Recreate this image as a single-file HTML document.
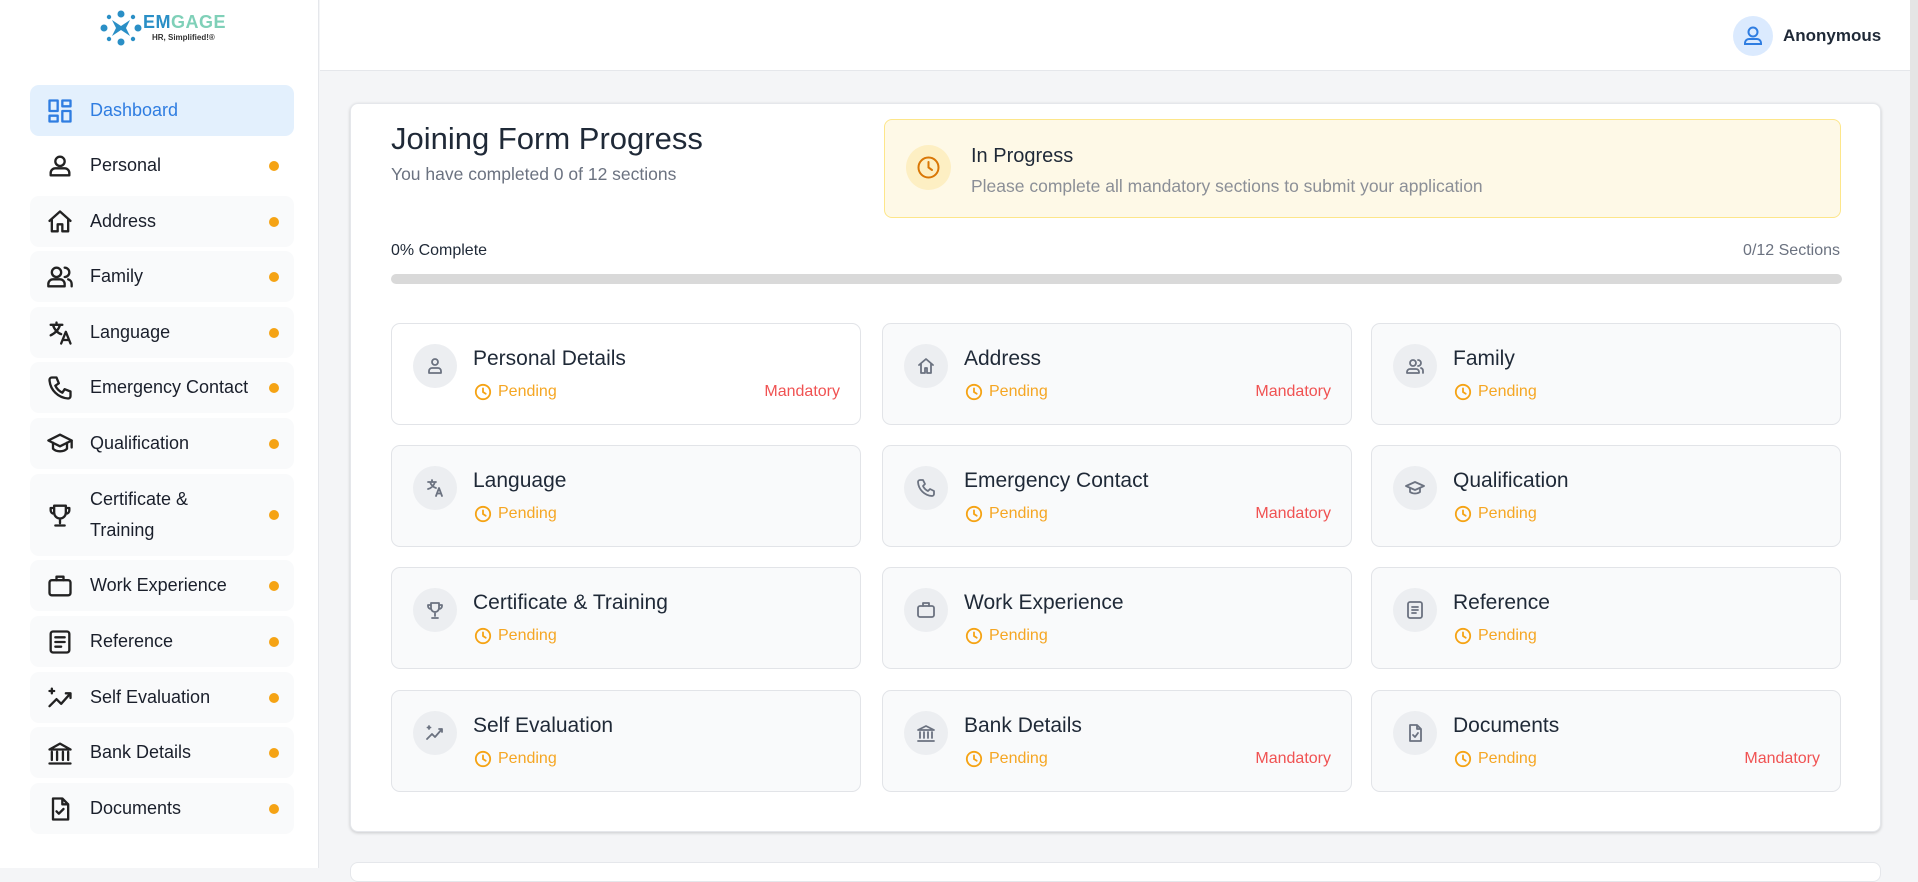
<!DOCTYPE html>
<html><head><meta charset="utf-8"><style>
*{box-sizing:border-box;margin:0;padding:0}
body{width:1918px;height:868px;overflow:hidden;font-family:"Liberation Sans",sans-serif;background:#f4f5f7;position:relative;color:#1f2937}
.side{position:absolute;left:0;top:0;width:319px;height:868px;background:#fff;border-right:1px solid #e5e7eb}
.nav{position:absolute;left:30px;width:264px;height:51px;border-radius:9px;background:#f9fafb;display:flex;align-items:center;font-size:18px;color:#1a1f2b}
.nav svg{position:absolute;left:16px;width:28px;height:28px;fill:none;stroke:#222;stroke-width:2;stroke-linecap:round;stroke-linejoin:round}
.nav span{position:absolute;left:60px;line-height:31px}
.nav i{position:absolute;left:239px;top:50%;margin-top:-5px;width:10px;height:10px;border-radius:50%;background:#f5a314}
.header{position:absolute;left:320px;top:0;right:0;height:71px;background:#fff;border-bottom:1px solid #e5e7eb}
.card{position:absolute;left:350px;top:103px;width:1531px;height:729px;background:#fff;border-radius:8px;box-shadow:0 1px 3px rgba(0,0,0,.18);border:1px solid #e5e7eb}
.sc{position:absolute;width:470px;height:102px;border:1px solid #e2e4e8;border-radius:9px;background:#f9fafb}
.sc .ic{position:absolute;left:21px;top:20px;width:44px;height:44px;border-radius:50%;background:#eceef1}
.sc .ic svg{position:absolute;left:12px;top:12px;width:20px;height:20px;fill:none;stroke:#6b7280;stroke-width:1.8;stroke-linecap:round;stroke-linejoin:round}
.sc .t{position:absolute;left:81px;top:23px;font-size:21px;color:#1f2937}
.sc .p{position:absolute;left:82px;top:59px;font-size:16px;color:#f5a623;display:flex;align-items:center}
.sc .p svg{width:18px;height:18px;margin-right:6px;fill:none;stroke:#f5a314;stroke-width:2;stroke-linecap:round}
.sc .m{position:absolute;right:20px;top:59px;font-size:16px;color:#f05252}
</style></head><body>
<div class="side">
 <svg style="position:absolute;left:100px;top:10px" width="42" height="36" viewBox="0 0 42 36">
  <g fill="#2a8fc6"><circle cx="21" cy="4" r="3.5"/><circle cx="21" cy="32" r="3.5"/><circle cx="4" cy="18" r="3.5"/><circle cx="38" cy="18" r="3.5"/><circle cx="9" cy="7" r="2.2"/><circle cx="33" cy="7" r="2.2"/><circle cx="9" cy="29" r="2.2"/><circle cx="33" cy="29" r="2.2"/>
  <path d="M12 10 L21 16 L30 10 L26 18 L30 26 L21 20 L12 26 L16 18Z"/></g></svg>
 <div style="position:absolute;left:143px;top:12px;font-size:18px;font-weight:bold;letter-spacing:0.5px"><span style="color:#2a8fc6">EM</span><span style="color:#7fd0b8">GAGE</span></div>
 <div style="position:absolute;left:152px;top:33px;font-size:8px;font-weight:bold;color:#333">HR, Simplified!®</div>

 <div class="nav" style="top:85px;background:#e3f0fd;color:#2f7de1"><svg viewBox="0 0 24 24" style="stroke:#2f7de1"><rect x="3" y="3" width="7" height="9"/><rect x="14" y="3" width="7" height="5"/><rect x="14" y="12" width="7" height="9"/><rect x="3" y="16" width="7" height="5"/></svg><span>Dashboard</span></div>
 <div class="nav" style="top:140px;background:#fff"><svg viewBox="0 0 24 24"><circle cx="12" cy="8" r="4"/><path d="M4 20v-2a4 4 0 0 1 4-4h8a4 4 0 0 1 4 4v2z"/></svg><span>Personal</span><i></i></div>
 <div class="nav" style="top:196px"><svg viewBox="0 0 24 24"><path d="M3 11l9-8 9 8M5 10v10h5v-6h4v6h5V10"/></svg><span>Address</span><i></i></div>
 <div class="nav" style="top:251px"><svg viewBox="0 0 24 24"><circle cx="9" cy="8" r="4"/><path d="M2 20v-2a4 4 0 0 1 4-4h6a4 4 0 0 1 4 4v2z"/><path d="M16 4a4 4 0 0 1 0 8M19 14a4 4 0 0 1 3 4v2"/></svg><span>Family</span><i></i></div>
 <div class="nav" style="top:307px"><svg viewBox="0 0 24 24"><path d="M4 5h10M9 3v2M6 5c1 4 4 7 7 8M12 5c-1 4-4 7-8 9M13 21l4-10 4 10M14.5 18h5"/></svg><span>Language</span><i></i></div>
 <div class="nav" style="top:362px"><svg viewBox="0 0 24 24"><path d="M5 3h4l2 5-3 2a12 12 0 0 0 6 6l2-3 5 2v4a2 2 0 0 1-2 2A17 17 0 0 1 3 5a2 2 0 0 1 2-2"/></svg><span>Emergency Contact</span><i></i></div>
 <div class="nav" style="top:418px"><svg viewBox="0 0 24 24"><path d="M2 9l10-5 10 5-10 5z"/><path d="M6 11v5c3 3 9 3 12 0v-5M22 9v6"/></svg><span>Qualification</span><i></i></div>
 <div class="nav" style="top:474px;height:82px"><svg viewBox="0 0 24 24"><path d="M7 4h10v6a5 5 0 0 1-10 0zM7 6H4v2a3 3 0 0 0 3 3M17 6h3v2a3 3 0 0 1-3 3M12 15v4M8 21h8"/></svg><span style="top:10px">Certificate &amp;</span><span style="top:41px">Training</span><i></i></div>
 <div class="nav" style="top:560px"><svg viewBox="0 0 24 24"><rect x="3" y="7" width="18" height="13" rx="2"/><path d="M9 7V4h6v3"/></svg><span>Work Experience</span><i></i></div>
 <div class="nav" style="top:616px"><svg viewBox="0 0 24 24"><rect x="4" y="3" width="16" height="18" rx="2"/><path d="M8 8h8M8 12h8M8 16h5"/></svg><span>Reference</span><i></i></div>
 <div class="nav" style="top:672px"><svg viewBox="0 0 24 24"><path d="M3 19l6-6 4 4 8-9M17 8h4v4M5 4v4M3 6h4"/></svg><span>Self Evaluation</span><i></i></div>
 <div class="nav" style="top:727px"><svg viewBox="0 0 24 24"><path d="M3 9l9-5 9 5zM5 11v7M9.5 11v7M14.5 11v7M19 11v7M3 21h18"/></svg><span>Bank Details</span><i></i></div>
 <div class="nav" style="top:783px"><svg viewBox="0 0 24 24"><path d="M6 3h8l5 5v13H6zM14 3v5h5M9 14l2 2 4-4"/></svg><span>Documents</span><i></i></div>
</div>

<div class="header">
 <div style="position:absolute;left:1413px;top:16px;width:40px;height:40px;border-radius:50%;background:#dbeafe"><svg width="40" height="40" viewBox="0 0 40 40" fill="none" stroke="#2f7de1" stroke-width="2"><circle cx="20" cy="16" r="4.5"/><path d="M12 28v-1a4 4 0 0 1 4-4h8a4 4 0 0 1 4 4v1z"/></svg></div>
 <div style="position:absolute;left:1463px;top:26px;font-size:17px;font-weight:bold;color:#1f2937">Anonymous</div>
</div>
<div style="position:absolute;right:0;top:0;width:8px;height:600px;background:#e5e5e5"></div>

<div class="card">
 <div style="position:absolute;left:40px;top:17px;font-size:31px;color:#1f2937">Joining Form Progress</div>
 <div style="position:absolute;left:40px;top:60px;font-size:17.5px;color:#6b7280">You have completed 0 of 12 sections</div>
 <div style="position:absolute;left:533px;top:15px;width:957px;height:99px;background:#fef9e7;border:1px solid #fde68a;border-radius:8px">
  <div style="position:absolute;left:21px;top:25px;width:45px;height:45px;border-radius:50%;background:#fdefc3"><svg width="45" height="45" viewBox="0 0 45 45" fill="none" stroke="#d97706" stroke-width="2" stroke-linecap="round"><circle cx="22.5" cy="22.5" r="10"/><path d="M22.5 17v5.5l3.5 2.5"/></svg></div>
  <div style="position:absolute;left:86px;top:25px;font-size:20px;color:#1f2937">In Progress</div>
  <div style="position:absolute;left:86px;top:56px;font-size:17.5px;color:#8b8f97">Please complete all mandatory sections to submit your application</div>
 </div>
 <div style="position:absolute;left:40px;top:138px;font-size:16px;color:#1f2937">0% Complete</div>
 <div style="position:absolute;right:40px;top:138px;font-size:16px;color:#6b7280">0/12 Sections</div>
 <div style="position:absolute;left:40px;top:170px;width:1451px;height:10px;border-radius:5px;background:#d9d9d9"></div>
</div>

<div id="grid"></div>
<div style="position:absolute;left:350px;top:862px;width:1531px;height:20px;background:#fff;border:1px solid #e5e7eb;border-radius:8px"></div>
<script>
var P='<svg viewBox="0 0 20 20"><circle cx="10" cy="10" r="8"/><path d="M10 6v4l3 2"/></svg>';
var ic={
p:'<circle cx="10" cy="6" r="3"/><path d="M4 17v-2a3 3 0 0 1 3-3h6a3 3 0 0 1 3 3v2z"/>',
a:'<path d="M3 9l7-6 7 6M5 8v9h4v-5h2v5h4V8"/>',
f:'<circle cx="8" cy="7" r="3"/><path d="M2 17v-1a3 3 0 0 1 3-3h6a3 3 0 0 1 3 3v1zM13 4a3 3 0 0 1 0 6M16 12a3 3 0 0 1 2 3v2"/>',
l:'<path d="M3 4h8M7 2v2M5 4c1 3 3 5 6 6M10 4c-1 3-3 6-7 7M11 18l3-8 3 8M12 15.5h4"/>',
e:'<path d="M4 2h3l2 4-2 2a10 10 0 0 0 5 5l2-2 4 2v3a2 2 0 0 1-2 2A15 15 0 0 1 2 4a2 2 0 0 1 2-2"/>',
q:'<path d="M1 8l9-4 9 4-9 4z"/><path d="M5 10v4c3 2 7 2 10 0v-4"/>',
c:'<path d="M6 3h8v5a4 4 0 0 1-8 0zM6 5H3v1a3 3 0 0 0 3 3M14 5h3v1a3 3 0 0 1-3 3M10 12v4M7 18h6"/>',
w:'<rect x="2" y="6" width="16" height="11" rx="2"/><path d="M7 6V3h6v3"/>',
r:'<rect x="3" y="2" width="14" height="16" rx="2"/><path d="M7 7h6M7 10h6M7 13h4"/>',
s:'<path d="M2 16l5-5 3 3 7-8M14 6h3v3M4 3v3M2.5 4.5h3"/>',
b:'<path d="M2 7l8-4 8 4zM4 9v6M8 9v6M12 9v6M16 9v6M2 18h16"/>',
d:'<path d="M5 2h7l4 4v12H5zM12 2v4h4M8 12l2 2 3-4"/>'};
var items=[['Personal Details','p',1],['Address','a',1],['Family','f',0],['Language','l',0],['Emergency Contact','e',1],['Qualification','q',0],['Certificate & Training','c',0],['Work Experience','w',0],['Reference','r',0],['Self Evaluation','s',0],['Bank Details','b',1],['Documents','d',1]];
var xs=[391,882,1371],ys=[323,445,567,690],h='';
items.forEach(function(it,i){
 h+='<div class="sc" style="left:'+xs[i%3]+'px;top:'+ys[Math.floor(i/3)]+'px;'+(i==0?'background:#fff':'')+'"><div class="ic"><svg viewBox="0 0 20 20">'+ic[it[1]]+'</svg></div><div class="t">'+it[0].replace('&','&amp;')+'</div><div class="p">'+P+'Pending</div>'+(it[2]?'<div class="m">Mandatory</div>':'')+'</div>';
});
document.getElementById('grid').innerHTML=h;
</script>
</body></html>
